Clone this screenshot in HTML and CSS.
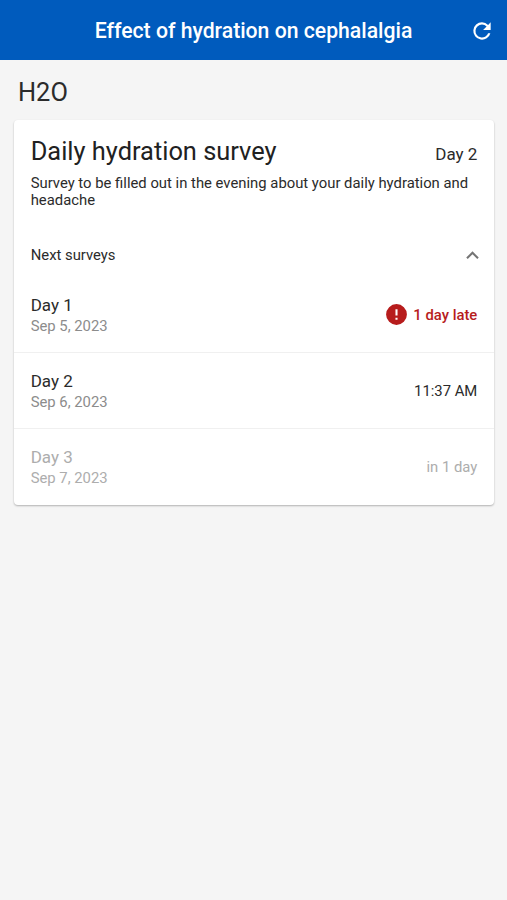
FILE: index.html
```html
<!DOCTYPE html>
<html lang="en">
<head>
<meta charset="utf-8">
<title>Effect of hydration on cephalalgia</title>
<link rel="stylesheet" href="styles.css">
</head>
<body>
<header class="toolbar">
  <h1 class="toolbar-title">Effect of hydration on cephalalgia</h1>
  <svg class="refresh" viewBox="0 0 24 24"><path d="M17.65 6.35A7.96 7.96 0 0 0 12 4a8 8 0 1 0 7.73 10h-2.08A6 6 0 1 1 12 6c1.66 0 3.14.69 4.22 1.78L13 11h7V4z"/></svg>
</header>
<main>
  <h2 class="group">H2O</h2>
  <section class="card">
    <div class="card-head">
      <h3 class="card-title">Daily hydration survey</h3>
      <span class="card-day">Day 2</span>
    </div>
    <p class="desc">Survey to be filled out in the evening about your daily hydration and headache</p>
    <div class="expander">
      <span>Next surveys</span>
      <svg class="chevron" viewBox="0 0 24 24"><path d="M12 8l-6 6 1.41 1.41L12 10.83l4.59 4.58L18 14z"/></svg>
    </div>
    <ul class="list">
      <li class="row">
        <div><div class="day">Day 1</div><div class="date">Sep 5, 2023</div></div>
        <div class="status late"><svg class="alert" viewBox="0 0 24 24"><path d="M12 2a10 10 0 1 0 0 20 10 10 0 0 0 0-20zm1 15h-2v-2h2zm0-4h-2V7h2z"/></svg><span>1 day late</span></div>
      </li>
      <li class="row">
        <div><div class="day">Day 2</div><div class="date">Sep 6, 2023</div></div>
        <div class="status">11:37 AM</div>
      </li>
      <li class="row disabled">
        <div><div class="day">Day 3</div><div class="date">Sep 7, 2023</div></div>
        <div class="status">in 1 day</div>
      </li>
    </ul>
  </section>
</main>
</body>
</html>
```

FILE: styles.css
```css
* { box-sizing: border-box; margin: 0; padding: 0; }
body { min-height: 900px; background: #f5f5f5; color: #2b2b2b; font-family: Roboto, sans-serif; }
.toolbar { display: grid; grid-template-columns: 50px 1fr 50px; align-items: center; height: 60px; padding-top: 2px; background: #005bbd; color: #fff; }
.toolbar-title { grid-column: 2; font-size: 21.2px; line-height: 24px; font-weight: 500; text-align: center; white-space: nowrap; }
.refresh { width: 26px; height: 26px; justify-self: center; fill: currentColor; }
.group { padding: 17px 18px 12px; font-size: 25.4px; line-height: 31px; font-weight: 400; }
.card { margin: 0 12.7px 0 13.7px; background: #fff; border-radius: 4px; box-shadow: 0 1px 2px rgba(0,0,0,.28); }
.card-head { display: flex; justify-content: space-between; align-items: baseline; padding: 15px 17px 0; }
.card-title { font-size: 25.4px; line-height: 32px; font-weight: 400; color: #212121; }
.card-day { font-size: 17px; }
.desc { padding: 8px 17px 0; font-size: 14.83px; line-height: 17px; }
.expander { display: flex; justify-content: space-between; align-items: center; height: 44px; margin-top: 24px; padding: 0 9px 0 17px; font-size: 14.83px; }
.chevron { width: 25px; height: 25px; fill: #757575; }
.list { list-style: none; }
.row { display: flex; justify-content: space-between; align-items: center; height: 76px; padding: 0 17px; border-bottom: 1px solid #f0f0f0; }
.row:last-child { border-bottom: 0; }
.day { font-size: 17px; line-height: 22px; padding-top: 1px; }
.date { font-size: 14.83px; line-height: 21px; color: #8c8c8c; }
.status { display: flex; align-items: center; gap: 4px; font-size: 14.83px; }
.late { color: #b71c1c; font-weight: 500; }
.alert { width: 25px; height: 25px; fill: currentColor; }
.disabled, .disabled .date { color: #adadad; }
```
